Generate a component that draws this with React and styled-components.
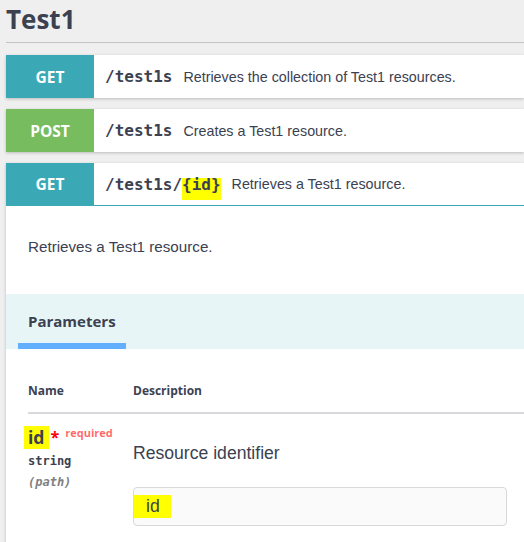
import React from "react";
import styled, { createGlobalStyle } from "styled-components";

const GlobalStyle = createGlobalStyle`
  body {
    margin: 0;
    background: #efefef;
    overflow: hidden;
    font-family: "Liberation Sans", Arial, sans-serif;
    color: #3b4151;
  }
`;

const METHOD_COLORS = {
  GET: "#3aa8b5",
  POST: "#77bc5f",
};

const ops = [
  { method: "GET", path: "/test1s", summary: "Retrieves the collection of Test1 resources." },
  { method: "POST", path: "/test1s", summary: "Creates a Test1 resource." },
];

const App = () => {
  return (
    <>
      <GlobalStyle />
      <Page>
        <Title>Test1</Title>
        <OpList>
          {ops.map((op, i) => (
            <OpBlock key={i}>
              <OpHeader>
                <Method color={METHOD_COLORS[op.method]}>{op.method}</Method>
                <Path>{op.path}</Path>
                <Summary>{op.summary}</Summary>
              </OpHeader>
            </OpBlock>
          ))}
          <OpBlock>
            <OpHeader open color={METHOD_COLORS.GET}>
              <Method color={METHOD_COLORS.GET}>GET</Method>
              <Path>
                /test1s/<PathMark>{"{id}"}</PathMark>
              </Path>
              <Summary>Retrieves a Test1 resource.</Summary>
            </OpHeader>
            <OpBody>
              <OpDescription>Retrieves a Test1 resource.</OpDescription>
              <SectionHeader>
                <Tab>Parameters</Tab>
              </SectionHeader>
              <ParamTable>
                <thead>
                  <tr>
                    <HeadCell>Name</HeadCell>
                    <HeadCell>Description</HeadCell>
                  </tr>
                </thead>
                <tbody>
                  <tr>
                    <NameCell>
                      <ParamName>
                        <NameMark>id</NameMark>
                        <Star>*</Star>
                        <Required>required</Required>
                      </ParamName>
                      <ParamType>string</ParamType>
                      <ParamIn>(path)</ParamIn>
                    </NameCell>
                    <DescCell>
                      <ParamDesc>Resource identifier</ParamDesc>
                      <Input>
                        <InputMark>id</InputMark>
                      </Input>
                    </DescCell>
                  </tr>
                </tbody>
              </ParamTable>
            </OpBody>
          </OpBlock>
        </OpList>
      </Page>
    </>
  );
};

export default App;

const Page = styled.div`
  padding-left: 6px;
  width: 518px;
`;

const Title = styled.h2`
  margin: 0;
  height: 43px;
  box-sizing: border-box;
  padding-top: 1px;
  border-bottom: 1px solid #c3c3c3;
  font-family: "Open Sans", sans-serif;
  font-weight: 700;
  font-size: 26px;
  line-height: 36px;
  color: #3b4151;
`;

const OpList = styled.div`
  display: flex;
  flex-direction: column;
  gap: 11px;
  padding-top: 12px;
`;

const OpBlock = styled.div`
  background: #fff;
  box-shadow: 0 1px 3px rgba(0, 0, 0, 0.22);
`;

const OpHeader = styled.div`
  display: flex;
  align-items: center;
  height: 43px;
  box-sizing: border-box;
  border-bottom: ${(p) => (p.open ? `1px solid ${p.color}` : "none")};
`;

const Method = styled.div`
  width: 88px;
  flex-shrink: 0;
  align-self: stretch;
  display: flex;
  align-items: center;
  justify-content: center;
  background: ${(p) => p.color};
  color: #fff;
  font-family: "Open Sans", sans-serif;
  font-weight: 700;
  font-size: 15.5px;
`;

const Path = styled.span`
  padding: 0 11px;
  white-space: nowrap;
  font-family: "DejaVu Sans Mono", monospace;
  font-weight: 700;
  font-size: 16px;
  color: #3b4151;
`;

/* the hand-drawn highlight sits a little low on the path */
const PathMark = styled.span`
  padding: 0 0 6px;
  background: linear-gradient(transparent 3px, #ffff00 3px);
`;

const Summary = styled.span`
  white-space: nowrap;
  font-size: 14.3px;
  color: #3b4151;
`;

const OpBody = styled.div`
  padding-bottom: 40px;
`;

const OpDescription = styled.p`
  margin: 0;
  padding: 31px 0 37px 22px;
  font-size: 15.2px;
  line-height: 20px;
`;

const SectionHeader = styled.div`
  height: 55px;
  background: #e8f5f6;
  padding-left: 12px;
  display: flex;
`;

const Tab = styled.div`
  width: 108px;
  box-sizing: border-box;
  padding: 5px 0 0 10px;
  display: flex;
  align-items: center;
  border-bottom: 6px solid #61affe;
  font-family: "Open Sans", sans-serif;
  font-weight: 700;
  font-size: 15px;
  color: #3b4151;
`;

const ParamTable = styled.table`
  margin-left: 22px;
  width: calc(100% - 22px);
  border-collapse: collapse;
`;

const HeadCell = styled.th`
  height: 50px;
  padding: 0 0 13px;
  vertical-align: bottom;
  text-align: left;
  border-bottom: 2px solid #d8d9dc;
  font-family: "Open Sans", sans-serif;
  font-weight: 700;
  font-size: 12px;
  line-height: 16px;
  color: #3b4151;
  &:first-child {
    width: 105px;
  }
`;

const NameCell = styled.td`
  vertical-align: top;
  padding: 12px 0 0;
`;

const ParamName = styled.div`
  display: flex;
  align-items: flex-start;
  font-family: "Open Sans", sans-serif;
  font-weight: 700;
  font-size: 17.6px;
  line-height: 23px;
  color: #3b4151;
`;

const NameMark = styled.span`
  background: #ffff00;
  margin-left: -4px;
  padding: 0 4px 0 4px;
`;

const Star = styled.span`
  color: red;
  font-size: 16px;
  margin-left: 2px;
  line-height: 22px;
`;

const Required = styled.span`
  font-size: 11px;
  line-height: 14px;
  color: rgba(255, 0, 0, 0.6);
  margin-left: 6px;
`;

const ParamType = styled.div`
  margin-top: 3px;
  font-family: "DejaVu Sans Mono", monospace;
  font-weight: 700;
  font-size: 12px;
  line-height: 18px;
  color: #3b4151;
`;

const ParamIn = styled.div`
  margin-top: 3px;
  font-family: "DejaVu Sans Mono", monospace;
  font-style: italic;
  font-weight: 600;
  font-size: 12px;
  line-height: 18px;
  color: #808080;
`;

const DescCell = styled.td`
  vertical-align: top;
  padding: 29px 0 0;
`;

const ParamDesc = styled.p`
  margin: 0 0 24px;
  font-size: 17.6px;
  line-height: 20px;
  color: #3b4151;
`;

const Input = styled.div`
  width: 374px;
  height: 39px;
  box-sizing: border-box;
  border: 1px solid #d9d9d9;
  border-radius: 4px;
  background: #fafafa;
  display: flex;
  align-items: center;
  font-size: 17.6px;
  color: #3b4151;
`;

const InputMark = styled.span`
  background: #ffff00;
  padding: 1px 11px 1px 12px;
`;
